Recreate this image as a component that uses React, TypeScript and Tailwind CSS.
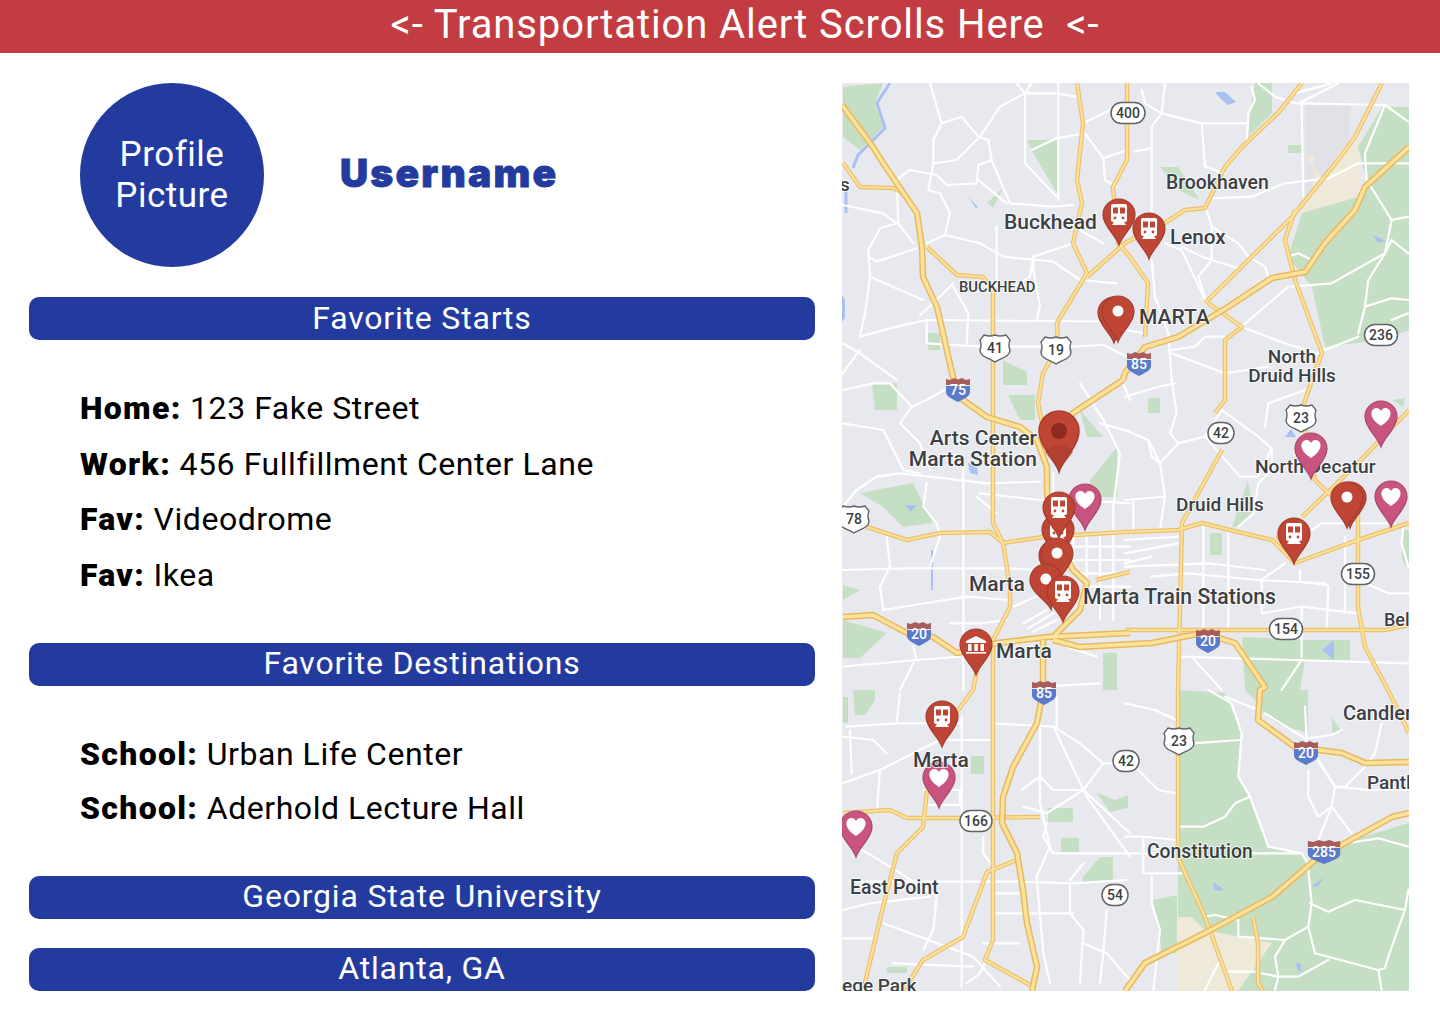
import React from 'react'

const BODY_FONT = 'font-["Roboto",sans-serif]'

// --- map data, traced by eye -------------------------------------------------
// each white road list is in the coordinates of a 3x crop of one map area
const WHITE_ROADS: { x: number; y: number; lines: string[] }[] = [
  {
    x: 840,
    y: 80,
    lines: [
      '270,10 305,130 365,110 415,170 445,180 455,240 510,370',
      '305,130 280,180 280,250 265,330',
      '280,250 350,240 415,175',
      '170,300 210,270 290,285 320,315 410,310 415,255 455,240',
      '415,300 500,370',
      '265,330 300,340 330,400 315,465 260,490',
      '315,465 420,490 490,530 640,545 720,600 830,610',
      '8,375 130,400 170,430 120,445 85,510 90,590 250,660',
      '170,310 175,430 220,490',
      '85,530 110,545 230,505',
      '90,590 75,700 60,770',
      '510,370 640,380 700,375',
      '470,440 470,620',
      '575,10 555,40 555,250 650,350',
      '530,10 555,40 480,80 420,170',
      '655,10 655,360',
      '555,40 650,40 710,50',
      '730,130 790,100 850,70',
      '575,210 650,175 735,160 790,235 860,210',
      '790,235 795,300 830,320',
      '700,440 790,490',
      '700,490 580,530 570,590 520,620',
      '580,530 580,570 600,680 590,720',
      '340,610 290,660 240,705',
      '60,770 170,740 260,720 840,725',
      '260,720 260,790',
      '340,620 385,700 380,790',
      '8,790 60,820 170,900',
      '60,810 8,880',
      '260,790 420,800',
      '510,800 600,800',
      '690,800 790,795 860,830',
    ],
  },
  {
    x: 1125,
    y: 80,
    lines: [
      '120,10 110,100 80,140 80,400',
      '50,30 60,70 110,100 230,130 370,130',
      '230,130 240,260 300,280',
      '30,215 75,205',
      '380,20 390,60 370,100 365,190',
      '260,355 380,350 480,310 610,295 700,250 850,250',
      '400,10 450,50 510,70 530,70 780,75 850,125',
      '530,70 535,350',
      '510,40 620,10',
      '520,70 640,10',
      '780,75 720,220 725,300 800,420 780,520 730,600 720,680 700,760',
      '800,420 850,410',
      '780,520 800,480 850,520',
      '720,680 800,655 850,660',
      '500,620 620,610 780,520',
      '490,530 520,520 560,540',
      '490,620 350,740 480,790 590,825',
      '700,770 600,810',
      '245,390 260,440 340,490 370,530 420,560 430,590',
      '260,440 260,540 220,590 245,670',
      '120,490 170,510 245,670',
      '170,500 230,530 260,540 340,565',
      '80,540 90,650 130,760 140,900',
      '0,750 60,760',
      '140,810 210,800 240,770 300,770',
      '140,820 300,880 430,860',
      '800,720 850,700',
    ],
  },
  {
    x: 840,
    y: 380,
    lines: [
      '8,30 100,10 150,10 215,80 260,60 330,20',
      '215,80 180,130 240,190 270,270',
      '8,130 130,150 190,270 240,280',
      '260,310 250,380 290,430 300,470 270,560',
      '8,380 50,330 110,290 180,280 270,290 440,310 600,305',
      '370,260 370,930',
      '8,570 200,565 510,565 600,570',
      '140,470 150,560 120,620 130,690',
      '130,690 380,650 510,660',
      '220,800 230,840 360,830',
      '8,860 230,840',
      '330,730 420,730 500,720',
      '180,930 220,850',
      '410,350 470,400',
      '420,340 600,360 720,360 870,370',
      '640,280 640,340',
      '700,500 870,500',
      '700,540 870,540',
      '700,580 870,580',
      '730,620 870,620',
      '700,470 700,570',
      '740,470 740,640',
      '780,470 780,720',
      '820,380 820,720',
      '720,10 790,120 820,180 840,220 820,380',
      '850,10 870,60',
      '780,130 870,155',
      '520,680 610,640',
      '550,730 620,690',
      '565,745 640,700',
      '580,755 650,720',
      '680,800 770,830',
      '600,920 780,910',
    ],
  },
  {
    x: 1125,
    y: 380,
    lines: [
      '0,50 100,20 150,10',
      '140,0 155,100 135,160 160,190 240,170 290,90',
      '0,150 70,180 105,250 160,190',
      '70,180 80,230 105,250 120,350 105,450',
      '0,360 120,350',
      '25,360 25,455',
      '240,170 345,290 400,290 440,205',
      '290,90 400,170 440,205 440,270 400,310 385,400 340,440',
      '420,140 430,70 540,30',
      '560,450 590,430 810,430',
      '310,460 310,750',
      '235,430 235,750',
      '0,560 250,550 420,570',
      '410,600 480,550',
      '80,590 190,580 400,600 600,610 610,620 605,740',
      '410,600 410,700 530,680 530,830',
      '525,570 525,605 605,615',
      '660,470 660,700',
      '700,600 790,640 850,640',
      '530,680 700,700',
      '0,480 160,470',
      '0,520 160,490',
      '0,550 80,530',
      '160,830 850,850',
      '200,830 290,930',
      '530,840 470,930',
      '835,440 830,490 850,560',
    ],
  },
  {
    x: 840,
    y: 690,
    lines: [
      '8,280 120,240 220,190 300,150 460,150',
      '20,110 170,100 180,10',
      '170,100 360,100',
      '365,80 365,890',
      '8,140 100,150 140,190',
      '30,120 35,250',
      '120,240 110,370',
      '250,300 360,300 360,345 260,345',
      '460,100 640,110 720,160 790,220 860,220',
      '650,20 650,110',
      '600,100 600,340 630,470 590,560 610,790 630,880',
      '545,300 600,260 640,300 730,300 790,220',
      '730,300 870,430',
      '640,110 740,320 870,500',
      '30,575 540,575 700,580 860,570',
      '50,470 150,530 290,620 280,720 250,780',
      '8,660 90,640 270,620',
      '130,700 400,800 480,890',
      '8,745 110,745',
      '160,820 400,830',
      '430,760 540,760',
      '460,610 555,610',
      '460,670 700,670',
      '690,580 690,670 730,720 720,880',
      '690,570 730,520',
      '730,760 800,790 870,870',
      '800,660 790,790 780,880',
      '550,350 620,370 730,300',
      '620,400 610,440 640,490 870,490',
      '430,440 430,490 460,530',
      '440,810 420,850 380,880',
    ],
  },
  {
    x: 1125,
    y: 690,
    lines: [
      '0,40 90,60 155,90',
      '200,160 345,150',
      '250,0 320,40 350,130 340,260 375,320 430,470 530,490 548,520 560,640 550,710 570,790 760,840',
      '300,20 400,60',
      '420,70 540,145 630,290',
      '540,50 545,145 620,135 650,120',
      '580,215 630,290 620,350 680,430',
      '720,230 660,290 630,290 730,300 850,300',
      '550,240 550,320 580,380 620,350 580,450',
      '40,240 100,300 155,310',
      '160,410 235,410 300,380 330,340 375,320',
      '0,440 55,440 155,450',
      '0,490 155,490',
      '55,440 55,550 170,550',
      '380,490 520,490',
      '80,560 80,640 105,720 85,900',
      '240,680 270,675 340,690 340,740 480,750 550,710',
      '480,750 450,800 460,860 520,860 610,810',
      '460,860 450,900',
      '410,850 460,860',
      '300,845 400,845',
      '280,820 240,900',
      '555,640 610,665 690,630 840,660 790,800 780,835 760,840 770,900',
      '850,600 840,660',
      '660,460 760,445 850,470',
      '770,100 750,190 720,230',
    ],
  },
]

// highways, in page coordinates
const HIGHWAYS = [
  '842,105 873,147 883,163 917,213 922,247 923,277 937,307 953,377 963,400 987,417 1020,427 1037,440 1047,467 1047,493 1053,530 1073,570 1087,583 1080,610 1053,637',
  '1043,640 1043,690 1040,707 1037,723 1013,767 1003,797 1002,823 1017,853 1023,890 1027,923 1037,967 1032,991',
  '1123,380 1073,413 1060,430',
  '1125,373 1145,347 1178,337 1228,307 1272,278 1305,272 1325,243 1355,210 1365,187 1409,147',
  '1125,373 1123,380',
  '843,617 873,615 907,633 933,637 957,653 997,643 1047,637 1130,633',
  '1053,640 1080,647 1152,643 1202,633 1235,643 1265,687 1260,690 1258,720 1295,747 1342,753 1365,763 1409,762',
  '1125,991 1145,963 1205,933 1272,897 1315,860 1345,843 1392,817 1409,813',
]

const ARTERIALS = [
  '843,163 860,187 893,188 903,193',
  '927,247 957,275 983,277 993,290 993,523 1003,543 1010,587 1010,607 993,640',
  '993,640 993,940 985,960 1030,985',
  '1077,83 1083,123 1077,180 1082,203 1073,243 1087,273 1057,323 1058,347 1043,373 1038,403 1047,447',
  '1127,83 1127,160 1113,187 1118,243 1130,257 1148,283 1145,337',
  '1087,277 1125,243 1165,223 1185,210 1205,208 1225,167 1242,147 1278,113 1302,83',
  '1205,303 1292,217 1338,160 1355,137 1382,83',
  '1295,210 1285,240 1295,280 1322,353 1312,380 1302,410 1305,430 1315,480 1328,493 1358,513 1358,607 1365,647 1388,690 1409,733',
  '1208,303 1242,327 1225,340 1225,400 1215,413',
  '1222,450 1182,523 1178,690 1178,857 1205,917 1232,991',
  '867,527 907,540 940,533 990,532 1003,543 1043,537 1125,532 1178,530 1202,523 1238,532 1272,540 1295,563 1358,540 1409,523',
  '1302,517 1358,463 1409,410',
  '1297,520 1278,537 1295,563',
  '1125,630 1385,630 1409,625',
  '843,813 890,810 907,818 960,818 1040,817',
  '927,790 923,827 897,853 883,907 863,991',
  '1017,860 987,872 963,937 923,960 903,991',
  '977,670 973,690 953,717',
  '1253,917 1258,943 1258,983 1263,991',
  '1096,580 1130,572',
]

const PARKS = [
  '1302,213 1358,197 1368,187 1358,147 1382,107 1409,107 1409,330 1380,340 1325,347 1312,287 1288,257',
  '1160,167 1178,167 1200,200 1178,190',
  '1255,83 1272,83 1272,113 1248,137 1250,110',
  '1288,145 1302,145 1302,153 1288,153',
  '843,87 883,83 875,103 883,127 860,150 843,137',
  '1027,140 1057,140 1057,193 1033,153',
  '987,203 1003,188 993,208',
  '928,333 940,333 940,350 928,350',
  '1003,360 1027,372 1027,385 1003,385',
  '872,383 897,383 897,410 875,410',
  '860,493 913,483 933,523 903,527 883,507',
  '1090,480 1117,447 1117,497 1093,497',
  '1080,410 1103,437 1087,437',
  '843,620 887,633 860,658 843,658',
  '1103,653 1117,653 1117,690 1103,690',
  '843,585 860,590 843,600',
  '1232,527 1248,480 1253,513 1238,527',
  '1148,398 1160,398 1160,413 1148,413',
  '1210,533 1222,533 1222,555 1210,555',
  '1242,637 1305,640 1350,640 1350,660 1305,660 1300,690 1245,690',
  '1178,690 1225,693 1242,733 1238,777 1248,793 1268,847 1302,853 1308,863 1342,843 1409,823 1409,991 1178,991',
  '1245,690 1308,690 1308,733 1280,725 1265,715 1255,700',
  '1153,900 1177,895 1177,953 1162,953',
  '1332,717 1342,732 1332,735',
  '1402,530 1409,530 1409,570 1402,560',
  '1392,400 1405,398 1403,407',
  '853,690 875,690 875,700 865,715 855,715',
  '843,697 848,697 848,723 843,723',
  '971,756 984,756 984,774 971,774',
  '1048,808 1073,808 1073,822 1048,822',
  '1061,838 1079,838 1079,852 1061,852',
  '1083,877 1100,857 1113,857 1113,882 1083,882',
  '1097,793 1115,800 1128,795 1128,808 1110,812',
  '887,967 907,967 907,973 887,973',
  '1008,395 1035,395 1035,420 1020,420',
]

const WATER = [
  '1215,92 1225,92 1236,102 1228,105 1222,100',
  '1322,650 1334,640 1334,660',
  '1285,437 1291,429 1296,437',
  '1213,882 1222,888 1223,891 1214,890',
  '1373,235 1386,241 1378,243',
  '1295,962 1301,964 1301,972 1298,970',
  '1312,886 1325,877 1317,887',
  '968,463 977,466 978,475 970,473',
  '905,505 917,505 911,512',
  '968,197 978,207 976,208',
  '842,295 845,300 845,318 842,322',
]

type PinKind = 'train' | 'dot' | 'heart' | 'museum'

const PINS: { x: number; y: number; kind: PinKind; rotate?: number }[] = [
  { x: 1119, y: 215, kind: 'train' },
  { x: 1149, y: 229, kind: 'train' },
  { x: 1114, y: 313, kind: 'dot' },
  { x: 1118, y: 312, kind: 'dot' },
  { x: 1085, y: 500, kind: 'heart' },
  { x: 1058, y: 530, kind: 'train' },
  { x: 1059, y: 508, kind: 'train' },
  { x: 1055, y: 556, kind: 'dot' },
  { x: 1057, y: 554, kind: 'dot' },
  { x: 1046, y: 580, kind: 'dot', rotate: -10 },
  { x: 1063, y: 592, kind: 'train' },
  { x: 976, y: 645, kind: 'museum' },
  { x: 942, y: 717, kind: 'train' },
  { x: 939, y: 778, kind: 'heart' },
  { x: 856, y: 827, kind: 'heart' },
  { x: 1311, y: 449, kind: 'heart' },
  { x: 1381, y: 417, kind: 'heart' },
  { x: 1391, y: 497, kind: 'heart' },
  { x: 1350, y: 498, kind: 'dot' },
  { x: 1347, y: 498, kind: 'dot' },
  { x: 1294, y: 534, kind: 'train' },
]

const LABELS: { x: number; y: number; text: string; size?: number; anchor?: 'middle' | 'end' }[] = [
  { x: 840, y: 191, text: 's', size: 19 },
  { x: 1166, y: 189, text: 'Brookhaven', size: 19.4 },
  { x: 1004, y: 229, text: 'Buckhead', size: 21 },
  { x: 1170, y: 244, text: 'Lenox', size: 20.7 },
  { x: 959, y: 292, text: 'BUCKHEAD', size: 14.8 },
  { x: 1139, y: 324, text: 'MARTA', size: 21 },
  { x: 1292, y: 363, text: 'North', size: 19, anchor: 'middle' },
  { x: 1292, y: 382, text: 'Druid Hills', size: 19, anchor: 'middle' },
  { x: 1037, y: 445, text: 'Arts Center', size: 21, anchor: 'end' },
  { x: 1037, y: 466, text: 'Marta Station', size: 21, anchor: 'end' },
  { x: 1255, y: 473, text: 'North Decatur', size: 19.2 },
  { x: 1176, y: 511, text: 'Druid Hills', size: 19 },
  { x: 969, y: 591, text: 'Marta', size: 21 },
  { x: 1083, y: 604, text: 'Marta Train Stations', size: 21.2 },
  { x: 996, y: 658, text: 'Marta', size: 21 },
  { x: 1384, y: 626, text: 'Bel', size: 18 },
  { x: 1343, y: 720, text: 'Candler', size: 20 },
  { x: 1367, y: 789, text: 'Panth', size: 19 },
  { x: 1147, y: 858, text: 'Constitution', size: 19.3 },
  { x: 850, y: 894, text: 'East Point', size: 19.5 },
  { x: 842, y: 992, text: 'ege Park', size: 19 },
]

const STATE_SHIELDS = [
  { x: 1128, y: 113, text: '400', w: 34 },
  { x: 1381, y: 335, text: '236', w: 33 },
  { x: 1221, y: 433, text: '42', w: 26 },
  { x: 1358, y: 574, text: '155', w: 33 },
  { x: 1286, y: 629, text: '154', w: 33 },
  { x: 1126, y: 761, text: '42', w: 26 },
  { x: 976, y: 821, text: '166', w: 32 },
  { x: 1115, y: 895, text: '54', w: 26 },
]

const US_SHIELDS = [
  { x: 995, y: 348, text: '41' },
  { x: 1056, y: 350, text: '19' },
  { x: 854, y: 519, text: '78' },
  { x: 1301, y: 418, text: '23' },
  { x: 1179, y: 741, text: '23' },
]

const INTERSTATES = [
  { x: 958, y: 390, text: '75' },
  { x: 1139, y: 364, text: '85' },
  { x: 919, y: 634, text: '20' },
  { x: 1208, y: 641, text: '20' },
  { x: 1044, y: 693, text: '85' },
  { x: 1306, y: 753, text: '20' },
  { x: 1324, y: 852, text: '285', wide: true },
]

// --- map pieces ---------------------------------------------------------------

function Pin({ x, y, kind, rotate = 0 }: { x: number; y: number; kind: PinKind; rotate?: number }) {
  const heart = kind === 'heart'
  const fill = heart ? '#c9547f' : '#bf4535'
  const edge = heart ? '#a9476c' : '#a53c2e'

  return (
    <g transform={`translate(${x} ${y}) rotate(${rotate})`}>
      <path
        d="M0 30 C-3 20 -16 11 -16 0 A16 16 0 1 1 16 0 C16 11 3 20 0 30 Z"
        fill={fill}
        stroke={edge}
        strokeWidth="1.2"
      />
      {kind === 'dot' && <circle r="5.5" cy="-1" fill="#fff" />}
      {heart && (
        <path
          d="M0 9 C-14 0 -10 -9 -4.5 -9 C-2.5 -9 -1 -8 0 -6 C1 -8 2.5 -9 4.5 -9 C10 -9 14 0 0 9 Z"
          fill="#fff"
        />
      )}
      {kind === 'train' && (
        <g fill="#fff">
          <path d="M-8 -9 Q-8 -11 -6 -11 H6 Q8 -11 8 -9 V5 Q8 7 6 7 H-6 Q-8 7 -8 5 Z" />
          <path d="M-5 7 L-7 10 H7 L5 7 Z" />
          <rect x="-6" y="-7.5" width="5" height="6" fill={fill} />
          <rect x="1" y="-7.5" width="5" height="6" fill={fill} />
          <circle cx="-4" cy="3" r="1.4" fill={fill} />
          <circle cx="4" cy="3" r="1.4" fill={fill} />
        </g>
      )}
      {kind === 'museum' && (
        <g fill="#fff">
          <path d="M0 -9 L10 -4 V-2 H-10 V-4 Z" />
          <rect x="-8" y="-1" width="3.5" height="7" />
          <rect x="-1.7" y="-1" width="3.5" height="7" />
          <rect x="4.5" y="-1" width="3.5" height="7" />
          <rect x="-10" y="7" width="20" height="1.6" />
        </g>
      )}
    </g>
  )
}

function BigPin() {
  return (
    <g transform="translate(1059 431)">
      <path
        d="M0 41 C-3 30 -20 15 -20 0 A20 20 0 1 1 20 0 C20 15 3 30 0 41 Z"
        fill="#bf4535"
        stroke="#a53c2e"
        strokeWidth="1.5"
      />
      <path d="M-14 21 Q-10 14 0 14 Q10 14 14 21 C9 29 2 34 0 41 C-2 34 -9 29 -14 21 Z" fill="#a53c2e" opacity="0.55" />
      <circle r="8" fill="#8e2a20" />
    </g>
  )
}

function MapLabel({ x, y, text, size = 20, anchor }: { x: number; y: number; text: string; size?: number; anchor?: 'middle' | 'end' }) {
  return (
    <text
      x={x}
      y={y}
      fontSize={size}
      textAnchor={anchor ?? 'start'}
      fontWeight={500}
      fill="#3c3f43"
      stroke="#ffffff"
      strokeWidth="2"
      strokeOpacity="0.75"
      paintOrder="stroke"
      className={BODY_FONT}
    >
      {text}
    </text>
  )
}

function ShieldText({ x, y, text, size = 14, fill = '#3c4043' }: { x: number; y: number; text: string; size?: number; fill?: string }) {
  return (
    <text x={x} y={y} fontSize={size} textAnchor="middle" fontWeight={500} fill={fill} className={BODY_FONT}>
      {text}
    </text>
  )
}

function MapPanel() {
  return (
    <svg viewBox="842 83 567 908" className="w-[567px] h-[908px] shrink-0 bg-[#e7e9ee]">
      <g className="blur-[0.5px]">
        <polygon points="1305,105 1350,105 1350,150 1325,185 1305,200" fill="#e0e2e8" />
        <polygon points="1305,157 1315,155 1312,190 1300,212 1305,215 1358,195 1362,137 1340,150 1325,180" fill="#efe9da" />
        {PARKS.map((p) => (
          <polygon key={p} points={p} fill="#c5dfc4" />
        ))}
        <polygon points="1178,917 1192,917 1205,930 1272,943 1238,991 1178,991" fill="#efe9da" />
        {WATER.map((p) => (
          <polygon key={p} points={p} fill="#a9c0f2" />
        ))}
        <polyline points="890,83 877,103 885,128 858,155 853,168" fill="none" stroke="#a9c0f2" strokeWidth="3" />
        <polyline points="932,550 932,590" fill="none" stroke="#a9c0f2" strokeWidth="2" />
        <polyline points="846,190 846,213" fill="none" stroke="#a9c0f2" strokeWidth="3" />

        {WHITE_ROADS.map((area) => (
          <g key={area.x + '-' + area.y} transform={`translate(${area.x} ${area.y}) scale(0.3333)`}>
            {area.lines.map((line) => (
              <polyline key={line} points={line} fill="none" stroke="#ffffff" strokeWidth="6.5" strokeLinejoin="round" strokeLinecap="round" />
            ))}
          </g>
        ))}

        {ARTERIALS.map((line) => (
          <polyline key={line} points={line} fill="none" stroke="#edc06a" strokeWidth="4.5" strokeLinejoin="round" />
        ))}
        {ARTERIALS.map((line) => (
          <polyline key={line + 'a'} points={line} fill="none" stroke="#fbe09c" strokeWidth="2.2" strokeLinejoin="round" />
        ))}
        {HIGHWAYS.map((line) => (
          <polyline key={line} points={line} fill="none" stroke="#e8b85f" strokeWidth="6.5" strokeLinejoin="round" />
        ))}
        {HIGHWAYS.map((line) => (
          <polyline key={line + 'a'} points={line} fill="none" stroke="#fde29c" strokeWidth="3.5" strokeLinejoin="round" />
        ))}
      </g>

      {STATE_SHIELDS.map((s) => (
        <g key={s.text + s.x}>
          <rect x={s.x - s.w / 2} y={s.y - 10.5} width={s.w} height={21} rx="10.5" fill="#fff" stroke="#5f6368" strokeWidth="1.5" />
          <ShieldText x={s.x} y={s.y + 5} text={s.text} />
        </g>
      ))}
      {US_SHIELDS.map((s) => (
        <g key={s.text + s.x}>
          <path
            transform={`translate(${s.x} ${s.y})`}
            d="M-11 -13 Q-5 -11 0 -13 Q5 -11 11 -13 L15 -8 Q13 -3 15 2 C15 9 6 10 0 14 C-6 10 -15 9 -15 2 Q-13 -3 -15 -8 Z"
            fill="#fff"
            stroke="#5f6368"
            strokeWidth="1.4"
          />
          <ShieldText x={s.x} y={s.y + 5} text={s.text} />
        </g>
      ))}
      {INTERSTATES.map((s) => (
        <g key={s.text + s.x}>
          <g transform={`translate(${s.x} ${s.y})${s.wide ? ' scale(1.35 1)' : ''}`}>
            <path d="M-12 -5 V-11 L-8 -10 L-4 -12 L0 -10.5 L4 -12 L8 -10 L12 -11 V-5 Z" fill="#a85c5c" />
            <path d="M-12 -4 H12 V2 C12 7 5 9 0 12 C-5 9 -12 7 -12 2 Z" fill="#5a7bc9" />
          </g>
          <ShieldText x={s.x} y={s.y + 5} text={s.text} fill="#ffffff" />
        </g>
      ))}

      {LABELS.map((l) => (
        <MapLabel key={l.text + l.x} {...l} />
      ))}
      {PINS.map((p) => (
        <Pin key={p.kind + p.x + '-' + p.y} {...p} />
      ))}
      <BigPin />
      <MapLabel x={913} y={767} text="Marta" size={21} />
    </svg>
  )
}

// --- left column --------------------------------------------------------------

function Bar({ children }: { children: React.ReactNode }) {
  return (
    <div className="h-[43px] w-full rounded-[10px] bg-[#233b9f] flex items-center justify-center pb-[2px] text-white text-[32px] tracking-[0.8px] leading-none">
      {children}
    </div>
  )
}

function Row({ label, value }: { label: string; value: string }) {
  return (
    <p className="text-[32px] tracking-[0.55px] leading-[38px] text-black">
      <span className="font-black tracking-[1.3px]">{label}</span> {value}
    </p>
  )
}

export default function App() {
  return (
    <div className={`w-[1440px] h-[1024px] bg-white overflow-hidden ${BODY_FONT}`}>
      <header className="h-[53px] bg-[#c23c41] flex items-center justify-center text-white text-[40px] tracking-[0.9px] leading-none whitespace-pre pl-[50px] pb-[4px]">
        {'<- Transportation Alert Scrolls Here  <-'}
      </header>

      <main className="flex gap-[27px] pt-[30px] pl-[29px]">
        <section className="w-[786px] shrink-0">
          <div className="flex items-center pl-[51px]">
            <div className="w-[184px] h-[184px] rounded-full bg-[#233b9f] flex items-center justify-center text-center text-white text-[35px] tracking-[0.5px] leading-[41px]">
              Profile
              <br />
              Picture
            </div>
            <h1 className={'ml-[76px] mb-[6px] text-[39px] tracking-[2.2px] leading-none text-[#233b9f] font-black [-webkit-text-stroke:0.8px_#233b9f] font-["Inter",sans-serif]'}>
              Username
            </h1>
          </div>

          <div className="mt-[30px]">
            <Bar>Favorite Starts</Bar>
          </div>

          <div className="pl-[51px] pt-[49px] flex flex-col gap-[17.6px]">
            <Row label="Home:" value="123 Fake Street" />
            <Row label="Work:" value="456 Fullfillment Center Lane" />
            <Row label="Fav:" value="Videodrome" />
            <Row label="Fav:" value="Ikea" />
          </div>

          <div className="mt-[49px]">
            <Bar>Favorite Destinations</Bar>
          </div>

          <div className="pl-[51px] pt-[49px] flex flex-col gap-[16px]">
            <Row label="School:" value="Urban Life Center" />
            <Row label="School:" value="Aderhold Lecture Hall" />
          </div>

          <div className="mt-[49px] flex flex-col gap-[29px]">
            <Bar>Georgia State University</Bar>
            <Bar>Atlanta, GA</Bar>
          </div>
        </section>

        <MapPanel />
      </main>
    </div>
  )
}
